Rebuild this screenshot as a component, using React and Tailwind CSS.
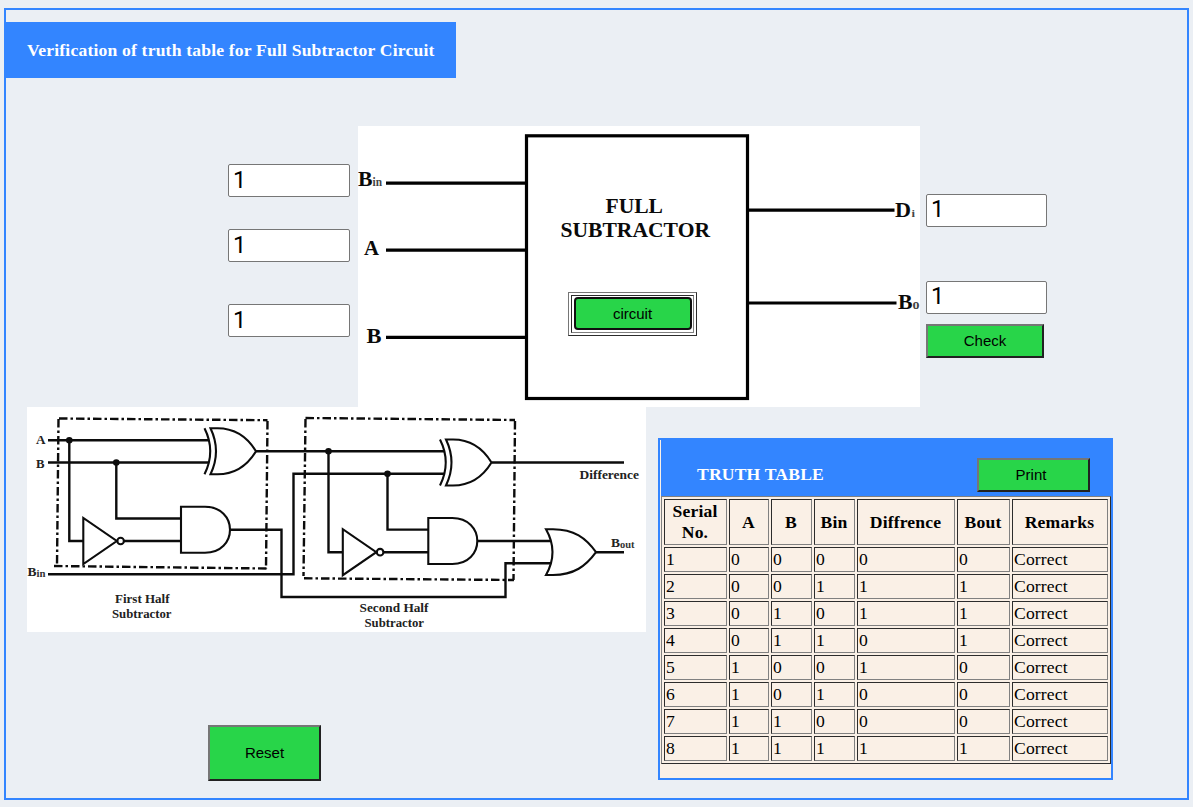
const rows = [
  [1, 0, 0, 0, 0, 0],
  [2, 0, 0, 1, 1, 1],
  [3, 0, 1, 0, 1, 1],
  [4, 0, 1, 1, 0, 1],
  [5, 1, 0, 0, 1, 0],
  [6, 1, 0, 1, 0, 0],
  [7, 1, 1, 0, 0, 0],
  [8, 1, 1, 1, 1, 1],
];

const headers = ["Serial No.", "A", "B", "Bin", "Diffrence", "Bout", "Remarks"];

const serif = "font-['Liberation_Serif',serif]";
const cellBorder = "border border-t-[#2c2c2c] border-l-[#2c2c2c] border-r-[#808080] border-b-[#808080]";

function Field({ className }) {
  return (
    <input
      type="text"
      defaultValue="1"
      className={`block h-[33px] rounded-[2px] border border-[#767676] bg-white px-1 pt-0 font-[Roboto,sans-serif] text-[23.5px] leading-[28px] text-black outline-none ${className}`}
    />
  );
}

function Button({ children, className }) {
  return (
    <button
      className={`block border-2 border-t-[#767676] border-l-[#767676] border-r-[#212121] border-b-[#212121] bg-[#28d549] pb-[2px] font-['Liberation_Sans',sans-serif] text-[15px] leading-none text-black ${className}`}
    >
      {children}
    </button>
  );
}

function Label({ x, y, w, size, children, bold = true, fill = "#0a0a0a" }) {
  return (
    <text
      x={x}
      y={y}
      textLength={w}
      lengthAdjust="spacingAndGlyphs"
      fontSize={size}
      fontWeight={bold ? 700 : 400}
      fill={fill}
    >
      {children}
    </text>
  );
}

function BlockDiagram() {
  return (
    <svg viewBox="358 126 562 281" className={`block h-[281px] w-[562px] bg-white ${serif}`}>
      <rect x="526.5" y="135.8" width="221" height="262.7" fill="none" stroke="#000" strokeWidth="3.2" />
      <g stroke="#000" strokeWidth="3.2">
        <path d="M386 183.2H526M386 250.2H526M386 337.4H526M748 210.2H894.5M748 303H896.5" />
      </g>
      <Label x="358" y="186" w="14.5" size="20.5">B</Label>
      <Label x="372.5" y="186" w="9.5" size="11.5" fill="#444">in</Label>
      <Label x="364" y="254.5" w="15" size="20.5">A</Label>
      <Label x="366.5" y="342.5" w="15" size="20.5">B</Label>
      <Label x="895" y="217" w="16" size="20.5">D</Label>
      <Label x="911.5" y="217" w="3.5" size="11" fill="#444">i</Label>
      <Label x="898" y="308.5" w="14.5" size="20.5">B</Label>
      <Label x="912.5" y="308.5" w="7" size="14" fill="#444">o</Label>
      <Label x="605.5" y="213.3" w="57.5" size="21">FULL</Label>
      <Label x="560.5" y="237.3" w="149.5" size="21">SUBTRACTOR</Label>
    </svg>
  );
}

function Xor({ x, y }) {
  return (
    <g transform={`translate(${x} ${y})`}>
      <path d="M0 -23H7C25 -23 37 -14 45.5 0C37 14 25 23 7 23H0Q11 0 0 -23Z" fill="#fff" />
      <path d="M-6 -23Q5.500 0 -6 23" />
    </g>
  );
}

function And({ x, y }) {
  return <path transform={`translate(${x} ${y})`} d="M0 -23H24C40 -23 49 -12 49 0S40 23 24 23H0Z" />;
}

function Not({ x, y }) {
  return (
    <g transform={`translate(${x} ${y})`}>
      <path d="M0 -23V23L33.500 0Z" />
      <circle cx="37.3" cy="0" r="3.3" />
    </g>
  );
}

function CircuitDiagram() {
  return (
    <svg viewBox="27 407 619 225" className={`block h-[225px] w-[619px] bg-white ${serif}`}>
      <g fill="none" stroke="#0c0c0c" strokeWidth="2.4" strokeDasharray="8.500 3 2.500 3">
        <path d="M59 418.500L267.500 420.200" />
        <path d="M267.500 421L266 569" />
        <path d="M54 566L267 568.500" />
        <path d="M58.500 419L57 566" />
        <path d="M305.500 418L515 420" />
        <path d="M515 421L513.500 580" />
        <path d="M304 578.300L514 580" />
        <path d="M305.500 419L303.500 576" />
      </g>
      <g fill="none" stroke="#0c0c0c" strokeWidth="2.4">
        <path d="M48 440.200H208.500M48 462.500H208.500" />
        <path d="M69.300 440V541H83M116.300 462.500V518.500H181" />
        <path d="M124 541H181M230 529.700H281.500V597H505.500V563.200H551" />
        <path d="M48 574.300H293.500V473.700H445" />
        <path d="M256 451.300H445M328.500 451.300V552.200H343" />
        <path d="M387.500 473.500V529.600H428M384 552.200H428M477.500 541H551" />
        <path d="M492 462.500H624M596 552.200H624" />
      </g>
      <g fill="none" stroke="#0c0c0c" strokeWidth="2.1">
        <Xor x={210.5} y={451.3} />
        <Xor x={446} y={462.5} />
        <And x={181} y={529.7} />
        <And x={428.3} y={541} />
        <Not x={83.3} y={541} />
        <Not x={342.8} y={552.2} />
        <path d="M546 529.200H553C574 529.200 586 538 596 552.200C586 566 574 575 553 575H546Q559 552 546 529.200Z" fill="#fff" />
      </g>
      <g fill="#0c0c0c">
        <circle cx="69.300" cy="440.200" r="3.300" />
        <circle cx="116.300" cy="462.500" r="3.300" />
        <circle cx="328.500" cy="451.300" r="3.300" />
        <circle cx="387.500" cy="473.700" r="3.300" />
      </g>
      <Label x="36" y="443.500" w="9.500" size="13" fill="#222">A</Label>
      <Label x="36" y="468" w="8.500" size="13" fill="#222">B</Label>
      <Label x="27.500" y="576" w="9" size="13" fill="#222">B</Label>
      <Label x="36.500" y="576.500" w="9" size="9.500" fill="#333">in</Label>
      <Label x="115" y="602.500" w="54.500" size="13" fill="#222">First Half</Label>
      <Label x="112" y="617.700" w="59.500" size="13" fill="#222">Subtractor</Label>
      <Label x="359.500" y="612" w="69" size="13" fill="#222">Second Half</Label>
      <Label x="364.500" y="627.300" w="59.500" size="13" fill="#222">Subtractor</Label>
      <Label x="579.500" y="479" w="59.500" size="13" fill="#222">Difference</Label>
      <Label x="611" y="546.500" w="9" size="13" fill="#222">B</Label>
      <Label x="620" y="547.500" w="14.500" size="10" fill="#333">out</Label>
    </svg>
  );
}

function TruthTable() {
  return (
    <section className="mt-[31px] h-[342px] w-[455px] border-2 border-[#3385ff] bg-[#faf0e6] pl-px">
      <div className="flex h-[56px] items-start justify-between bg-[#3385ff] pr-[21px] pl-9">
        <h2 className="pt-6 text-[17.6px] leading-5 font-bold tracking-[0.18px] text-white">TRUTH TABLE</h2>
        <Button className="mt-[18px] h-[34px] w-[113px] pr-[11px] pl-[6px]">Print</Button>
      </div>
      <table className="w-[450px] table-fixed border-separate border-spacing-[2px] border border-t-[#808080] border-r-[#2c2c2c] border-b-[#2c2c2c] border-l-[#808080] text-[17.6px] leading-[21px] tracking-[0.15px] text-black">
        <colgroup>
          <col className="w-[63px]" />
          <col className="w-[40px]" />
          <col className="w-[41px]" />
          <col className="w-[41px]" />
          <col className="w-[98px]" />
          <col className="w-[53px]" />
          <col className="w-[96px]" />
        </colgroup>
        <thead>
          <tr>
            {headers.map((h) => (
              <th key={h} className={`h-[46px] py-px pr-[2px] pl-px text-center font-bold ${cellBorder}`}>{h}</th>
            ))}
          </tr>
        </thead>
        <tbody>
          {rows.map((r) => (
            <tr key={r[0]}>
              {r.map((v, i) => (
                <td key={i} className={`h-[25px] p-px ${cellBorder}`}>{v}</td>
              ))}
              <td className={`h-[25px] p-px ${cellBorder}`}>Correct</td>
            </tr>
          ))}
        </tbody>
      </table>
    </section>
  );
}

export default function App() {
  return (
    <div className={`h-[807px] w-[1193px] overflow-hidden bg-[#ebeff4] pt-2 pl-1 ${serif}`}>
      <main className="flex h-[792px] w-[1185px] flex-col border-2 border-[#3385ff] pt-3">
        <h1 className="flex h-14 w-[450px] shrink-0 items-center bg-[#3385ff] pl-[21px] text-[17.6px] font-bold tracking-[0.18px] whitespace-nowrap text-white">
          Verification of truth table for Full Subtractor Circuit
        </h1>

        <div className="mt-12 ml-[222px] flex h-[281px] shrink-0">
          <div className="mr-2 w-[122px] pt-[38px]">
            <Field className="w-full pb-px" />
            <Field className="mt-8 w-full pb-px" />
            <Field className="mt-[42px] w-full pb-px" />
          </div>
          <div className="relative">
            <BlockDiagram />
            <div className="absolute top-[166px] left-[210px] h-[44px] w-[129px] border border-t-[#767676] border-r-[#2c2c2c] border-b-[#2c2c2c] border-l-[#767676] p-[2px]">
              <div className={`flex h-full w-full items-start px-[2px] pt-px ${cellBorder}`}>
                <button className="h-[33px] w-[118px] shrink-0 rounded-[4px] border-2 border-[#101010] bg-[#28d549] pr-px font-['Liberation_Sans',sans-serif] text-[15px] leading-none text-black">
                  circuit
                </button>
              </div>
            </div>
          </div>
          <div className="ml-1.5 w-[121px] pt-[68px]">
            <Field className="w-full pb-[3px]" />
            <Field className="mt-[54px] w-full pb-[3px]" />
            <Button className="mt-2.5 h-[34px] w-[118px]">Check</Button>
          </div>
        </div>

        <div className="ml-[21px] flex items-start gap-3">
          <div>
            <CircuitDiagram />
            <Button className="mt-[93px] ml-[181px] h-14 w-[113px]">Reset</Button>
          </div>
          <TruthTable />
        </div>
      </main>
    </div>
  );
}
